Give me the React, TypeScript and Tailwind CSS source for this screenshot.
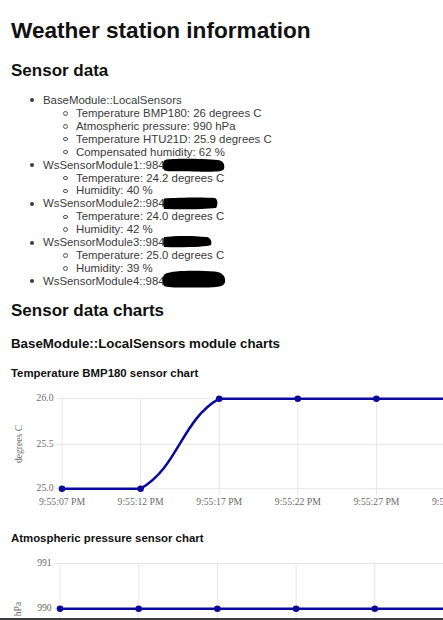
import React from "react";

type Module = {
    name: string;
    redact?: { w: number; d: string };
    readings: string[];
};

const modules: Module[] = [
    {
        name: "BaseModule::LocalSensors",
        readings: [
            "Temperature BMP180: 26 degrees C",
            "Atmospheric pressure: 990 hPa",
            "Temperature HTU21D: 25.9 degrees C",
            "Compensated humidity: 62 %",
        ],
    },
    {
        name: "WsSensorModule1::984",
        redact: { w: 62, d: "M2 1 C12 -1 40 0 55 1 C61 2 62 6 61 10 C60 13 50 13 30 12.5 C14 12 3 13 1 11 C-1 8 0 2 2 1 Z" },
        readings: ["Temperature: 24.2 degrees C", "Humidity: 40 %"],
    },
    {
        name: "WsSensorModule2::984",
        redact: { w: 55, d: "M1 1.5 C15 0.5 40 0 52 1 C55 2 55 9 53 11 C40 12.5 15 12.5 1 12 C0 9 0 4 1 1.5 Z" },
        readings: ["Temperature: 24.0 degrees C", "Humidity: 42 %"],
    },
    {
        name: "WsSensorModule3::984",
        redact: { w: 49, d: "M1 1 C12 -0.5 30 -0.5 44 1 C48 2 49 6 48 9 C44 11 20 11.5 1 11 C0 8 0 3 1 1 Z" },
        readings: ["Temperature: 25.0 degrees C", "Humidity: 39 %"],
    },
    {
        name: "WsSensorModule4::984",
        redact: { w: 63, d: "M2 -1 C10 -5 35 -4.5 52 -3.5 C60 -2.5 63 2 62 7 C61 11 58 12.5 40 12.5 C20 12.5 5 13 1 11 C-1 7 -1 1 2 -1 Z" },
        readings: [],
    },
];

const LINE = "#0a0a9a";
const GRID = "#e6e6e6";
const LABEL = "#6b6b6b";
const serif = "'Liberation Serif', 'Times New Roman', serif";

function Redaction({ w, d }: { w: number; d: string }) {
    return (
        <svg width={w} height={13} viewBox={`0 0 ${w} 13`} overflow="visible" className="inline-block align-top -ml-[2px]">
            <path d={d} fill="#000" />
        </svg>
    );
}

function TemperatureChart() {
    const xs = [62, 140.6, 219.2, 297.8, 376.4, 455];
    const times = ["9:55:07 PM", "9:55:12 PM", "9:55:17 PM", "9:55:22 PM", "9:55:27 PM", "9:55:32 PM"];
    const ys = [108.7, 108.7, 18.7, 18.7, 18.7, 18.7];
    return (
        <svg width={443} height={134} className="block">
            {[18.7, 64.3, 108.7].map((y) => (
                <line key={y} x1={56} x2={443} y1={y} y2={y} stroke={GRID} />
            ))}
            {xs.map((x) => (
                <line key={x} x1={x} x2={x} y1={18.7} y2={115} stroke={GRID} />
            ))}
            {[
                ["26.0", 18.7],
                ["25.5", 64.3],
                ["25.0", 108.7],
            ].map(([t, y]) => (
                <text key={t} x={53.5} y={Number(y)} textAnchor="end" dominantBaseline="middle" fontSize={9.7} fill={LABEL} fontFamily={serif}>
                    {t}
                </text>
            ))}
            {xs.map((x, i) => (
                <text key={i} x={x} y={123} textAnchor="middle" dominantBaseline="middle" fontSize={9.7} fill={LABEL} fontFamily={serif}>
                    {times[i]}
                </text>
            ))}
            <text x={20} y={64} transform="rotate(-90 20 64)" textAnchor="middle" dominantBaseline="middle" fontSize={9.6} fill={LABEL} fontFamily={serif}>
                degrees C
            </text>
            <path
                d="M62 108.7 L140.6 108.7 C178.5 87 181.3 40.4 219.2 18.7 L455 18.7"
                fill="none"
                stroke={LINE}
                strokeWidth={2.5}
            />
            {xs.map((x, i) => (
                <circle key={x} cx={x} cy={ys[i]} r={3.3} fill={LINE} />
            ))}
        </svg>
    );
}

function PressureChart() {
    const xs = [60, 138.7, 217.4, 296.1, 374.8, 453.5];
    return (
        <svg width={443} height={73} className="block">
            {[18.5, 63.8].map((y) => (
                <line key={y} x1={54} x2={443} y1={y} y2={y} stroke={GRID} />
            ))}
            {xs.map((x) => (
                <line key={x} x1={x} x2={x} y1={18.5} y2={73} stroke={GRID} />
            ))}
            <text x={51.7} y={18.5} textAnchor="end" dominantBaseline="middle" fontSize={9.7} fill={LABEL} fontFamily={serif}>
                991
            </text>
            <text x={51.7} y={63.8} textAnchor="end" dominantBaseline="middle" fontSize={9.7} fill={LABEL} fontFamily={serif}>
                990
            </text>
            <text x={19} y={64} transform="rotate(-90 19 64)" textAnchor="middle" dominantBaseline="middle" fontSize={9.6} fill={LABEL} fontFamily={serif}>
                hPa
            </text>
            <line x1={60} x2={443} y1={63.8} y2={63.8} stroke={LINE} strokeWidth={2.5} />
            {xs.map((x) => (
                <circle key={x} cx={x} cy={63.8} r={3.3} fill={LINE} />
            ))}
        </svg>
    );
}

export default function App() {
    return (
        <div className="w-[443px] h-[620px] overflow-hidden bg-white flex flex-col font-['Liberation_Sans',Arial,sans-serif] text-[#111]">
            <h1 className="mt-[18px] px-[11px] text-[22.6px] leading-[26px] font-bold">Weather station information</h1>
            <h2 className="mt-[17px] px-[11px] text-[17px] leading-[20px] font-bold">Sensor data</h2>

            <div className="mt-[13px] text-[11.4px] leading-[12.93px] text-[#3b3b3b]">
                {modules.map((m) => (
                    <div key={m.name}>
                        <div className="flex items-center h-[12.93px] pl-[29.7px]">
                            <span className="w-[4px] h-[4px] rounded-full bg-[#3b3b3b] mr-[9.3px] shrink-0" />
                            <span className="whitespace-nowrap">{m.name}</span>
                            {m.redact && <Redaction w={m.redact.w} d={m.redact.d} />}
                        </div>
                        {m.readings.map((r) => (
                            <div key={r} className="flex items-center h-[12.93px] pl-[63px]">
                                <span className="w-[4.5px] h-[4.5px] rounded-full border border-[#555] mr-[8.5px] shrink-0" />
                                <span className="whitespace-nowrap">{r}</span>
                            </div>
                        ))}
                    </div>
                ))}
            </div>

            <h2 className="mt-[13.4px] px-[11px] text-[17px] leading-[20px] font-bold">Sensor data charts</h2>
            <h3 className="mt-[14.8px] px-[11px] text-[13.3px] leading-[15px] font-bold">BaseModule::LocalSensors module charts</h3>

            <h4 className="mt-[15.7px] px-[11px] text-[11.4px] leading-[13px] font-bold">Temperature BMP180 sensor chart</h4>
            <TemperatureChart />

            <h4 className="mt-[18px] px-[11px] text-[11.4px] leading-[13px] font-bold">Atmospheric pressure sensor chart</h4>
            <PressureChart />

            <div className="h-[2px] bg-[#3d3d3d] shrink-0" />
        </div>
    );
}
